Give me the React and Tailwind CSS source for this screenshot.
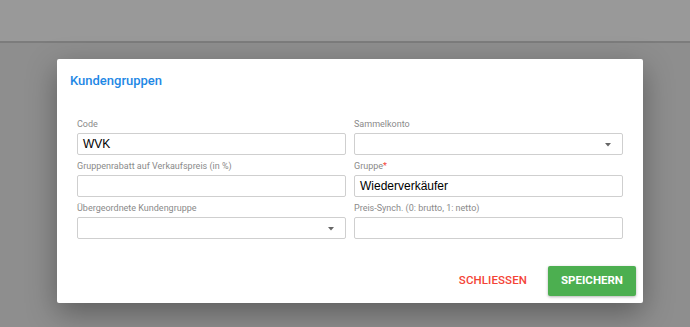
export default function App() {
  const Field = ({ label, required, value, select }) => (
    <div className="flex flex-col">
      <div className="h-[13px] text-[9px] leading-[13px] text-[#8a8a8a] font-['Roboto',sans-serif] mb-[2px]">
        {label}
        {required && <span className="text-[#f44336]">*</span>}
      </div>
      <div className="relative h-[22px] border border-[#cfcfcf] rounded-[2px] bg-white flex items-center px-[5px]">
        <span className="text-[12px] text-black font-['Liberation_Sans',sans-serif]">{value}</span>
        {select && (
          <svg className="absolute right-[11px] top-[9px]" width="6" height="4" viewBox="0 0 6 4">
            <path d="M0 0 L6 0 L3 3.5 Z" fill="#666" />
          </svg>
        )}
      </div>
    </div>
  );

  return (
    <div className="w-[690px] h-[327px] bg-[#8e8e8e] overflow-hidden font-['Roboto',sans-serif]">
      <div className="h-[43px] bg-[#999999] border-b-2 border-[#7c7c7c]" />
      <div className="ml-[57px] mt-[16px] w-[586px] h-[244px] bg-white rounded-[2px] shadow-[0_10px_30px_rgba(0,0,0,0.35)] flex flex-col">
        <div className="px-[13px] pt-[14px] text-[13px] leading-[16px] font-medium text-[#1e88e5]">
          Kundengruppen
        </div>
        <div className="px-[20px] pt-[29px] grid grid-cols-2 gap-x-[8px] gap-y-[5px]">
          <Field label="Code" value="WVK" />
          <Field label="Sammelkonto" select />
          <Field label="Gruppenrabatt auf Verkaufspreis (in %)" />
          <Field label="Gruppe" required value="Wiederverkäufer" />
          <Field label="Übergeordnete Kundengruppe" select />
          <Field label="Preis-Synch. (0: brutto, 1: netto)" />
        </div>
        <div className="mt-auto mb-[7px] mr-[7px] flex justify-end items-center gap-[21px]">
          <button className="text-[11.5px] font-medium text-[#f44336] tracking-[0.1px]">SCHLIESSEN</button>
          <button className="w-[88px] h-[30px] bg-[#4caf50] rounded-[2px] text-white text-[11.5px] font-bold shadow-[0_1px_3px_rgba(0,0,0,0.3)]">
            SPEICHERN
          </button>
        </div>
      </div>
    </div>
  );
}
